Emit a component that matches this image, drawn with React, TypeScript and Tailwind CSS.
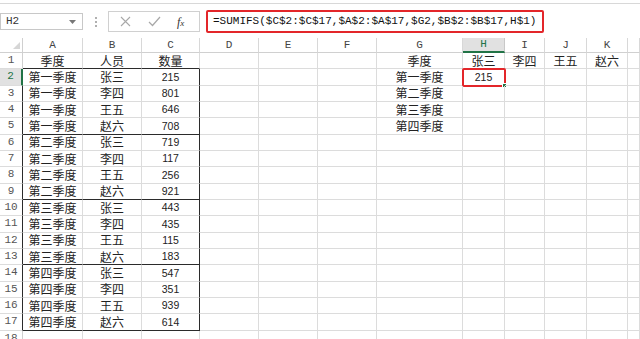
import React from "react"

const cols = ["A", "B", "C", "D", "E", "F", "G", "H", "I", "J", "K", ""]
const colWidths = "23px 60px 59px 58px 59px 59px 59px 86px 42px 40px 42px 41px 1fr"

const quarters = ["第一季度", "第二季度", "第三季度", "第四季度"]
const people = ["张三", "李四", "王五", "赵六"]
const values = [215, 801, 646, 708, 719, 117, 256, 921, 443, 435, 115, 183, 547, 351, 939, 614]

const cjk = "[font-family:'Noto_Sans_CJK_SC',sans-serif] text-[12px] leading-none text-[#222]"
const num = "[font-family:'Liberation_Sans',Arial,sans-serif] text-[10.5px] leading-none text-[#222]"

// contents of a cell: row r (1-based), col index c (0 = A)
const cellText = (r: number, c: number): { text: string; kind: "cjk" | "num" } | null => {
  if (r === 1) {
    const head: Record<number, string> = { 0: "季度", 1: "人员", 2: "数量", 6: "季度", 7: "张三", 8: "李四", 9: "王五", 10: "赵六" }
    return head[c] ? { text: head[c], kind: "cjk" } : null
  }
  if (r >= 2 && r <= 17) {
    const i = r - 2
    if (c === 0) return { text: quarters[Math.floor(i / 4)], kind: "cjk" }
    if (c === 1) return { text: people[i % 4], kind: "cjk" }
    if (c === 2) return { text: String(values[i]), kind: "num" }
  }
  if (r >= 2 && r <= 5 && c === 6) return { text: quarters[r - 2], kind: "cjk" }
  if (r === 2 && c === 7) return { text: "215", kind: "num" }
  return null
}

const Cell = ({ r, c }: { r: number; c: number }) => {
  const inTable = c <= 2 && r >= 1 && r <= 17
  const darkBottom = inTable && (r === 1 || r === 5 || r === 9 || r === 13 || r === 17)
  const darkRight = c === 2 && r >= 2 && r <= 17
  const content = cellText(r, c)
  const selected = r === 2 && c === 7
  return (
    <div
      className={`relative flex items-center justify-center h-[16.33px] border-r border-b ${
        darkBottom ? "border-b-[#2b2b2b]" : "border-b-[#dcdcdc]"
      } ${darkRight ? "border-r-[#2b2b2b]" : "border-r-[#dcdcdc]"} ${
        selected ? "outline-2 outline-[#e3262a] -outline-offset-1 rounded-[1px]" : ""
      }`}
    >
      {content && <span className={content.kind === "cjk" ? cjk : num}>{content.text}</span>}
      {selected && <span className="absolute -right-[3px] -bottom-[3px] w-[5px] h-[5px] bg-[#217346] border border-white" />}
    </div>
  )
}

const App = () => {
  const rows = Array.from({ length: 18 }, (_, i) => i + 1)
  return (
    <div className="w-[640px] h-[339px] overflow-hidden bg-white flex flex-col">
      {/* formula bar */}
      <div className="h-[38px] shrink-0 border-t-[3px] border-t-white relative">
        <div className="border-t border-[#d8d8d8]" />
        <div className="flex items-center h-[34px] pt-[1px]">
          <div className="w-[83px] h-[17px] border border-[#c8c8c8] flex items-center justify-between pl-[5px] pr-[6px]">
            <span className="[font-family:'Liberation_Mono',monospace] text-[11px] text-[#333]">H2</span>
            <svg width="7" height="4" viewBox="0 0 7 4"><path d="M0 0h7L3.5 4z" fill="#777" /></svg>
          </div>
          <div className="w-[25px] flex flex-col items-center gap-[2px]">
            <span className="w-[2px] h-[2px] bg-[#b0b0b0]" />
            <span className="w-[2px] h-[2px] bg-[#b0b0b0]" />
            <span className="w-[2px] h-[2px] bg-[#b0b0b0]" />
          </div>
          <div className="w-[92px] h-[21px] border border-[#d0d0d0] flex items-center pl-[10px]">
            <svg width="11" height="11" viewBox="0 0 11 11" className="ml-[1px]">
              <path d="M1 1L10 10M10 1L1 10" stroke="#a8a8a8" strokeWidth="1.1" />
            </svg>
            <svg width="13" height="11" viewBox="0 0 13 11" className="ml-[17px]">
              <path d="M1 6L4.5 9.5L12 1" stroke="#a8a8a8" strokeWidth="1.2" fill="none" />
            </svg>
            <span className="ml-[16px] [font-family:'Liberation_Serif',serif] italic text-[12px] text-[#333]">
              f<span className="text-[9px]">x</span>
            </span>
          </div>
          <div className="ml-[6px] w-[338px] h-[23px] border-2 border-[#e3262a] rounded-[2px] flex items-center pl-[5px]">
            <span className="[font-family:'Liberation_Mono',monospace] text-[11px] text-[#111] whitespace-nowrap">
              =SUMIFS($C$2:$C$17,$A$2:$A$17,$G2,$B$2:$B$17,H$1)
            </span>
          </div>
        </div>
      </div>

      {/* sheet grid */}
      <div className="grid" style={{ gridTemplateColumns: colWidths }}>
        <div className="h-[15px] border-r border-b border-[#d0d0d0] flex items-end justify-end pr-[2px] pb-[3px]">
          <svg width="7" height="7" viewBox="0 0 7 7"><path d="M7 0V7H0z" fill="#d6d6d6" /></svg>
        </div>
        {cols.map((name, i) => (
          <div
            key={name + i}
            className={`h-[15px] border-r flex items-center justify-center [font-family:'Liberation_Mono',monospace] text-[11px] leading-none ${
              name === "H"
                ? "bg-[#e1e1e1] border-r-[#c8c8c8] border-b-2 border-b-[#217346] text-[#217346]"
                : "border-r-[#d8d8d8] border-b border-b-[#d0d0d0] text-[#444]"
            }`}
          >
            {name}
          </div>
        ))}

        {rows.map((r) => (
          <React.Fragment key={r}>
            <div
              className={`h-[16.33px] flex items-center justify-center border-b border-b-[#dcdcdc] border-r [font-family:'Liberation_Mono',monospace] text-[11px] leading-none ${
                r === 2
                  ? "bg-[#e1e1e1] border-r-2 border-r-[#217346] text-[#217346]"
                  : r >= 3 && r <= 17
                  ? "border-r-[#2b2b2b] text-[#555]"
                  : "border-r-[#d0d0d0] text-[#555]"
              }`}
            >
              {r}
            </div>
            {cols.map((_, c) => (
              <Cell key={c} r={r} c={c} />
            ))}
          </React.Fragment>
        ))}
      </div>
    </div>
  )
}

export default App
